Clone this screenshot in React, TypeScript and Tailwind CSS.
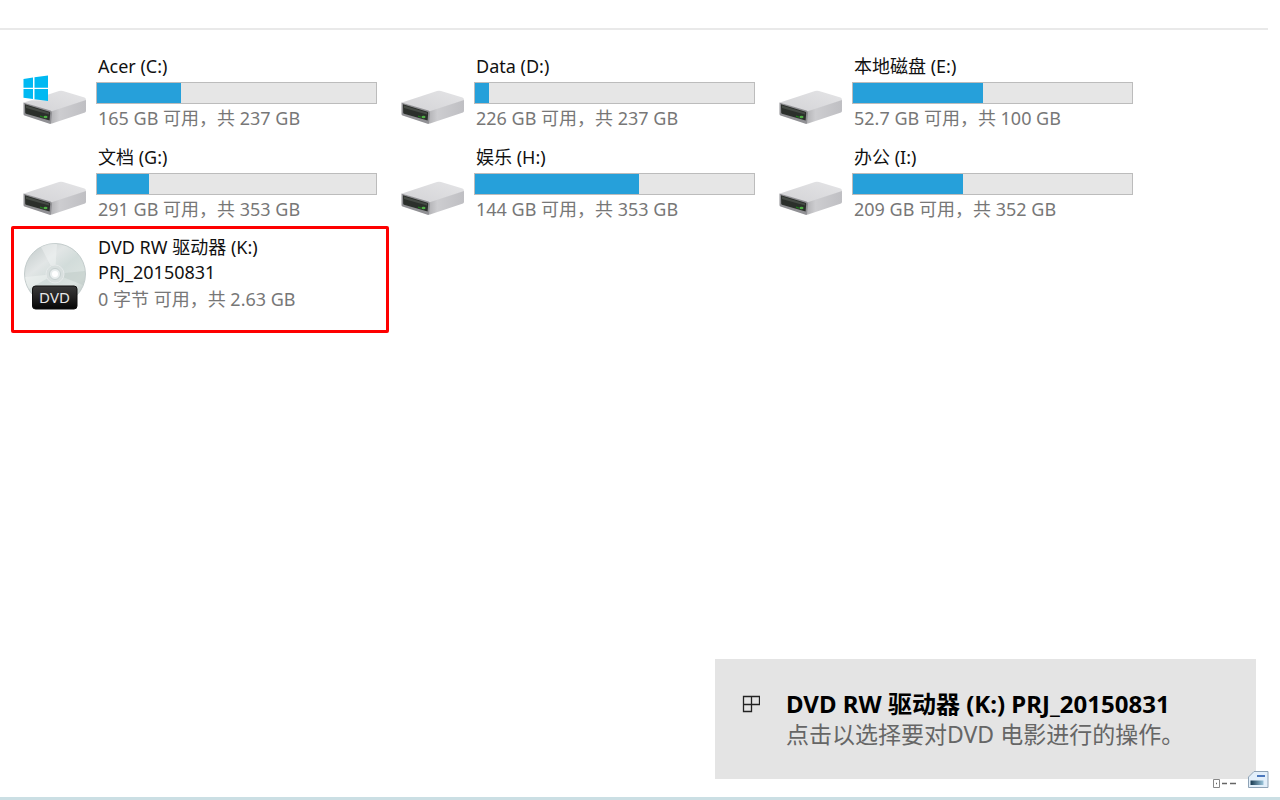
import { clsx } from 'clsx'

interface Drive {
  name:    string
  space:   string
  used:    number
  system?: boolean
}

const drives: Drive[] = [
  { name: 'Acer (C:)',     space: '165 GB 可用，共 237 GB',  used: 30, system: true },
  { name: 'Data (D:)',     space: '226 GB 可用，共 237 GB',  used: 5 },
  { name: '本地磁盘 (E:)', space: '52.7 GB 可用，共 100 GB', used: 46.5 },
  { name: '文档 (G:)',     space: '291 GB 可用，共 353 GB',  used: 18.5 },
  { name: '娱乐 (H:)',     space: '144 GB 可用，共 353 GB',  used: 58.7 },
  { name: '办公 (I:)',     space: '209 GB 可用，共 352 GB',  used: 39.5 },
]

// ─── Icons ────────────────────────────────────────────────────────────────────

function DriveIcon({ system }: { system?: boolean }) {
  return (
    <svg viewBox="0 0 64 67" className="h-[67px] w-16 shrink-0" aria-hidden="true">
      <defs>
        <linearGradient id="driveTop" x1="0" y1="1" x2="1" y2="0">
          <stop offset="0" stopColor="#d3d3d6" />
          <stop offset="1" stopColor="#e4e4e6" />
        </linearGradient>
        <linearGradient id="driveSide" x1="0" y1="0" x2="1" y2="0">
          <stop offset="0" stopColor="#b2b2b5" />
          <stop offset="0.25" stopColor="#cdcdd0" />
          <stop offset="1" stopColor="#bfbfc3" />
        </linearGradient>
      </defs>
      <path d="M1 43.5 36 32q2-.6 4 0l21.500 6.500q2 1 1.500 3L29 53z" fill="url(#driveTop)" />
      <path d="M28 52.500 63 41v11q0 1-1 1.400L29 64.500l-1.500.300z" fill="url(#driveSide)" />
      <path d="m.500 43.500 27 8q1.500.700 1.500 2.500l-1 10.500q-.500.600-1.500.300L1.500 56.500q-1-.300-1-1.500z" fill="#909094" />
      <path d="m2 45.300 24.500 7.400q.800.300.700 1.300l-.600 7.600L3 54.700q-.800-.300-.800-1z" fill="#2b2f2b" />
      <path d="m3 46.500 23 7v2L3 49z" fill="#454a45" />
      <ellipse cx="22.500" cy="58" rx="2" ry="1.300" fill="#4fae45" />
      <path d="m17 56.500 3 1v1.200l-3-1z" fill="#1d7a1a" />
      {system && (
        <>
          <path d="M0 17.500h25v24H0z" fill="#fff" opacity="0.600" />
          <path d="m.500 20 9.500-1.500v10.200H.500zM11.500 18.200 25 16.500v12.200H11.500zM.500 30H10v10L.500 38.700zM11.500 30H25v12l-13.500-1.800z" fill="#00b9f2" />
        </>
      )}
    </svg>
  )
}

function DvdIcon() {
  return (
    <svg viewBox="0 0 64 67" className="h-[67px] w-16 shrink-0 overflow-visible" aria-hidden="true">
      <defs>
        <linearGradient id="disc" x1="0.100" y1="0" x2="0.900" y2="1">
          <stop offset="0" stopColor="#c3cbcb" />
          <stop offset="0.300" stopColor="#e2e6e6" />
          <stop offset="0.500" stopColor="#d2dcda" />
          <stop offset="0.750" stopColor="#dbe3e0" />
          <stop offset="1" stopColor="#b9c2c0" />
        </linearGradient>
        <linearGradient id="dvdLabel" x1="0" y1="0" x2="0" y2="1">
          <stop offset="0" stopColor="#3a3a3a" />
          <stop offset="0.500" stopColor="#222" />
          <stop offset="1" stopColor="#050505" />
        </linearGradient>
      </defs>
      <circle cx="32" cy="33" r="30.500" fill="url(#disc)" stroke="#c3cccc" />
      <path d="M32 33 18 6A30 30 0 0 1 34 3z" fill="#f4f6f6" opacity="0.450" />
      <path d="m32 33 30-3a30 30 0 0 1-2 14z" fill="#bdcac6" opacity="0.500" />
      <path d="M32 33 2 36a30 30 0 0 0 4 12z" fill="#f2f5f4" opacity="0.500" />
      <circle cx="32" cy="33" r="9" fill="#d8dfde" stroke="#e6eaea" />
      <circle cx="32" cy="33" r="5.500" fill="#e9eeee" stroke="#c6cfcf" />
      <circle cx="32" cy="33" r="3" fill="#fff" />
      <rect x="9.500" y="45" width="44.500" height="23" rx="3" fill="url(#dvdLabel)" stroke="#111" />
      <text x="31.500" y="62" textAnchor="middle" fontSize="15" fill="#e8e8e8" fontFamily="Noto Sans, sans-serif">DVD</text>
    </svg>
  )
}

function TileGlyph() {
  return (
    <svg viewBox="0 0 18 18" className="size-[18px] shrink-0" fill="none" stroke="#222" strokeWidth="1.300" aria-hidden="true">
      <path d="M1.500 1.500h16v8h-16zM9.500 1.500v15h-8v-15" />
    </svg>
  )
}

function DetailsIcon() {
  return (
    <svg viewBox="0 0 26 12" className="h-3 w-[26px]" fill="none" stroke="#666" aria-hidden="true">
      <path d="M2.500 2.500h6v8h-6zM3 1v1M8 1v1" stroke="#888" />
      <path d="M5 6.500h1M11 6.500h5M19 6.500h6" strokeWidth="1.400" />
    </svg>
  )
}

function TilesIcon() {
  return (
    <svg viewBox="0 0 22 18" className="h-[18px] w-[22px]" aria-hidden="true">
      <defs>
        <linearGradient id="tilesBar" x1="0" y1="0" x2="1" y2="0">
          <stop offset="0" stopColor="#17384f" />
          <stop offset="1" stopColor="#9cc6dc" />
        </linearGradient>
      </defs>
      <path d="M7 .500h14v16H1.500V6z" fill="#e3effa" stroke="#8fa3b6" />
      <path d="M10 5h8" stroke="#4c78bd" strokeWidth="2" />
      <rect x="3.500" y="9.500" width="13" height="4.500" fill="url(#tilesBar)" />
    </svg>
  )
}

// ─── Drive tiles ──────────────────────────────────────────────────────────────

function DriveTile({ name, space, used, system }: Drive) {
  return (
    <li className="flex items-center gap-[9px] pt-[11px] pr-3 pb-[5px] pl-3">
      <DriveIcon system={system} />
      <div className="min-w-0 flex-1">
        <p className="pl-0.5 leading-[22px] text-[#111]">{name}</p>
        <div
          role="meter"
          aria-label={name}
          aria-valuenow={used}
          aria-valuemin={0}
          aria-valuemax={100}
          className="mt-[5px] mb-0.5 h-[22px] border border-[#bcbcbc] bg-[#e6e6e6]"
        >
          <div className="h-full bg-[#26a0da]" style={{ width: `${used}%` }} />
        </div>
        <p className="pl-0.5 leading-6 text-[#777]">{space}</p>
      </div>
    </li>
  )
}

function DvdTile() {
  return (
    <li className="flex items-center gap-[9px] rounded-xs border-3 border-[#fe0000] pt-1.5 pr-2 pb-4 pl-[9px]">
      <DvdIcon />
      <div className="min-w-0 flex-1 pl-0.5 text-[#111]">
        <p className="leading-[25px]">DVD RW 驱动器 (K:)</p>
        <p className="leading-[25px]">PRJ_20150831</p>
        <p className="leading-[29px] text-[#777]">0 字节 可用，共 2.63 GB</p>
      </div>
    </li>
  )
}

// ─── Toast ────────────────────────────────────────────────────────────────────

function Toast() {
  return (
    <button className="absolute right-6 bottom-[21px] flex w-[541px] items-start gap-[26px] bg-[#e4e4e4] px-[27px] py-[30px] text-left">
      <span className="pt-1.5">
        <TileGlyph />
      </span>
      <span className="block leading-[30px] whitespace-nowrap">
        <span className="block text-[24px] leading-[30px] font-bold text-black">DVD RW 驱动器 (K:) PRJ_20150831</span>
        <span className="block text-[23px] leading-[30px] text-[#666]">点击以选择要对DVD 电影进行的操作。</span>
      </span>
    </button>
  )
}

// ─── Page ─────────────────────────────────────────────────────────────────────

const views = [
  { label: '详细信息', icon: <DetailsIcon /> },
  { label: '平铺',     icon: <TilesIcon /> },
]

export default function App() {
  return (
    <div
      lang="zh-CN"
      className="relative flex min-h-screen flex-col bg-white font-['Noto_Sans','Noto_Sans_CJK_SC',sans-serif] text-[18px]"
    >
      <header className="mr-3 h-[30px] border-b-2 border-[#e9e9e9]" />

      <main className="flex-1 pt-3.5 pl-[11px]">
        <ul className="grid grid-cols-[repeat(auto-fill,378px)]">
          {drives.map((d) => (
            <DriveTile key={d.name} {...d} />
          ))}
          <DvdTile />
        </ul>
      </main>

      <Toast />

      <footer className="flex items-end justify-end gap-2.5 border-b-3 border-[#cbdfe4] pr-[11px] pb-2">
        {views.map((v, i) => (
          <button key={v.label} aria-label={v.label} className={clsx(i === 1 && 'relative z-10')}>
            {v.icon}
          </button>
        ))}
      </footer>
    </div>
  )
}
